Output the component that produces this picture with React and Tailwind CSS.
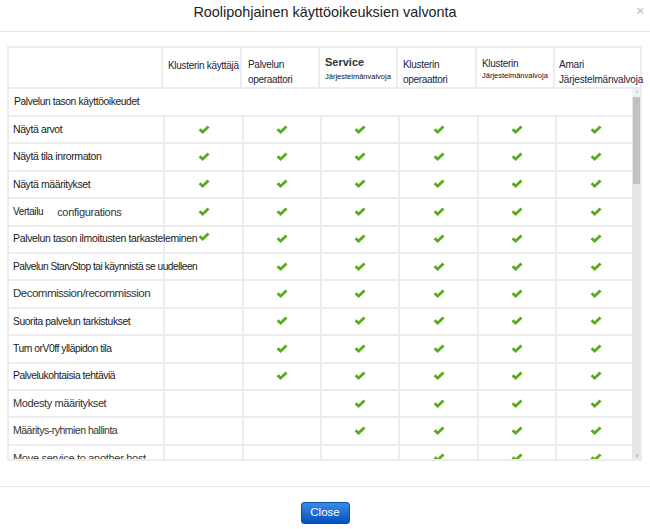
import React from 'react';

const COLS = ['w-[79px]', 'w-[78px]', 'w-[78px]', 'w-[79px]', 'w-[78px]', 'w-[77px]'];

const BASE = 'text-[10.5px] tracking-[-0.4px] text-[#1a1a1a]';
const GRAY = 'text-[11px] tracking-[-0.4px] text-[#333]';

const ROWS = [
  { label: 'Näytä arvot', cls: BASE, checks: [0, 1, 2, 3, 4, 5] },
  { label: 'Näytä tila inrormaton', cls: BASE, checks: [0, 1, 2, 3, 4, 5] },
  { label: 'Näytä määritykset', cls: BASE, checks: [0, 1, 2, 3, 4, 5] },
  { label: 'vertailu', cls: 'text-[10px] tracking-[-0.4px] text-[#1a1a1a]', checks: [0, 1, 2, 3, 4, 5] },
  { label: 'Palvelun tason ilmoitusten tarkasteleminen', cls: 'text-[10.5px] tracking-[-0.35px] text-[#1a1a1a]', checks: [0, 1, 2, 3, 4, 5] },
  { label: 'Palvelun StarvStop tai käynnistä se uudelleen', cls: 'text-[10.2px] tracking-[-0.5px] text-[#1a1a1a]', checks: [1, 2, 3, 4, 5] },
  { label: 'Decommission/recommission', cls: 'text-[11.5px] tracking-[-0.5px] text-[#333]', checks: [1, 2, 3, 4, 5] },
  { label: 'Suorita palvelun tarkistukset', cls: 'text-[10.3px] tracking-[-0.4px] text-[#1a1a1a]', checks: [1, 2, 3, 4, 5] },
  { label: 'Tum orV0ff ylläpidon tila', cls: 'text-[10.3px] tracking-[-0.45px] text-[#1a1a1a]', checks: [1, 2, 3, 4, 5] },
  { label: 'Palvelukohtaisia tehtäviä', cls: 'text-[10.3px] tracking-[-0.45px] text-[#1a1a1a]', checks: [1, 2, 3, 4, 5] },
  { label: 'Modesty määritykset', cls: GRAY, checks: [2, 3, 4, 5] },
  { label: 'Määritys-ryhmien hallinta', cls: 'text-[10.5px] tracking-[-0.5px] text-[#333]', checks: [2, 3, 4, 5] },
  { label: 'Move service to another host', cls: 'text-[11px] tracking-[-0.3px] text-[#333]', checks: [3, 4, 5] },
];

const Check = () => (
  <svg width="12" height="10" viewBox="0 0 12 10">
    <path d="M0.6 5.3 L2.6 3.3 L4.6 5.3 L9.5 0.4 L11.5 2.4 L4.6 9 Z" fill="#58ab1a" />
  </svg>
);

const Row = ({ row }) => (
  <div className="flex h-[27.4px] border-b-2 border-[#ececec]">
    <div className={`w-[156px] shrink-0 border-r-2 border-[#ececec] pl-[4px] flex items-center whitespace-nowrap ${row.cls}`}>
      {row.label === 'vertailu' ? (
        <>
          <span>Vertailu</span>
          <span className="ml-[14px] text-[11px] tracking-[-0.3px] text-[#333]">configurations</span>
        </>
      ) : row.label}
    </div>
    {COLS.map((w, i) => (
      <div key={i} className={`${w} shrink-0 ${i < 5 ? 'border-r-2 border-[#ececec]' : ''} flex items-center justify-center`}>
        {row.checks.includes(i) && (
          <span className={row.label.startsWith('Palvelun tason ilm') && i === 0 ? 'relative top-[-2px]' : ''}>
            <Check />
          </span>
        )}
      </div>
    ))}
  </div>
);

export default function App() {
  return (
    <div className="w-[650px] h-[529px] bg-white relative overflow-hidden" style={{ fontFamily: '"Liberation Sans", Arial, sans-serif' }}>
      <div className="h-[32px] border-b border-[#e5e5e5] flex items-center justify-center">
        <h1 className="text-[14.4px] text-[#222] mt-[-5px]">Roolipohjainen käyttöoikeuksien valvonta</h1>
      </div>
      <span className="absolute right-[6px] top-[1px] text-[#c8c8c8] text-[13px] font-bold">×</span>

      <div className="pt-[14px] pl-[7px]">
        <div className="w-[635px] border-2 border-[#ececec]">
          <div className="flex h-[41px] border-b-2 border-[#ececec] text-[10px] tracking-[-0.3px] text-[#1c2440]">
            <div className="w-[154px] shrink-0 border-r-2 border-[#ececec]" />
            <div className="w-[79px] shrink-0 border-r-2 border-[#ececec] pl-[5px] pt-[10px] whitespace-nowrap">Klusterin käyttäjä</div>
            <div className="w-[78px] shrink-0 border-r-2 border-[#ececec] pl-[6px] pt-[9px] leading-[15px]">Palvelun<br />operaattori</div>
            <div className="w-[78px] shrink-0 border-r-2 border-[#ececec] pl-[5px] pt-[7px] whitespace-nowrap tracking-normal">
              <div className="text-[11px] font-bold text-[#333] leading-[14px]">Service</div>
              <div className="text-[7.5px] text-[#111] mt-[2px]">Järjestelmänvalvoja</div>
            </div>
            <div className="w-[79px] shrink-0 border-r-2 border-[#ececec] pl-[5px] pt-[9px] leading-[15px]">Klusterin<br />operaattori</div>
            <div className="w-[78px] shrink-0 border-r-2 border-[#ececec] pl-[5px] pt-[10px] whitespace-nowrap">
              <div className="leading-[12px]">Klusterin</div>
              <div className="text-[7.5px] text-[#111] tracking-normal">Järjestelmänvalvoja</div>
            </div>
            <div className="flex-1 pl-[4px] pt-[9px] text-[10px] tracking-[-0.2px] leading-[15px] whitespace-nowrap">Amari<br />Järjestelmänvalvoja</div>
          </div>

          <div className="flex h-[370px] overflow-hidden">
            <div className="w-[623px] shrink-0">
              <div className="h-[28px] border-b-2 border-[#ececec] pl-[5px] flex items-center text-[10.3px] tracking-[-0.4px] text-[#1a1a1a]">
                Palvelun tason käyttöoikeudet
              </div>
              {ROWS.map((r, i) => <Row key={i} row={r} />)}
            </div>
            <div className="w-[10px] shrink-0 bg-[#e6e6e6] flex flex-col items-stretch">
              <div className="h-[8px] bg-[#f1f1f1] flex items-center justify-center text-[6px] text-[#999] leading-none">^</div>
              <div className="h-[87px] bg-[#c1c1c1] mx-[1px]" />
              <div className="flex-1" />
              <div className="h-[8px] flex items-center justify-center text-[6px] text-[#999] leading-none">v</div>
            </div>
          </div>
        </div>
      </div>

      <div className="absolute left-0 right-0 top-[486px] border-t border-[#e5e5e5] flex justify-center pt-[15px]">
        <button className="w-[49px] h-[22px] rounded-[3px] bg-gradient-to-b from-[#3a8ae3] to-[#0050c0] border border-[#0a4fb0] text-white text-[11.5px]">Close</button>
      </div>
    </div>
  );
}
